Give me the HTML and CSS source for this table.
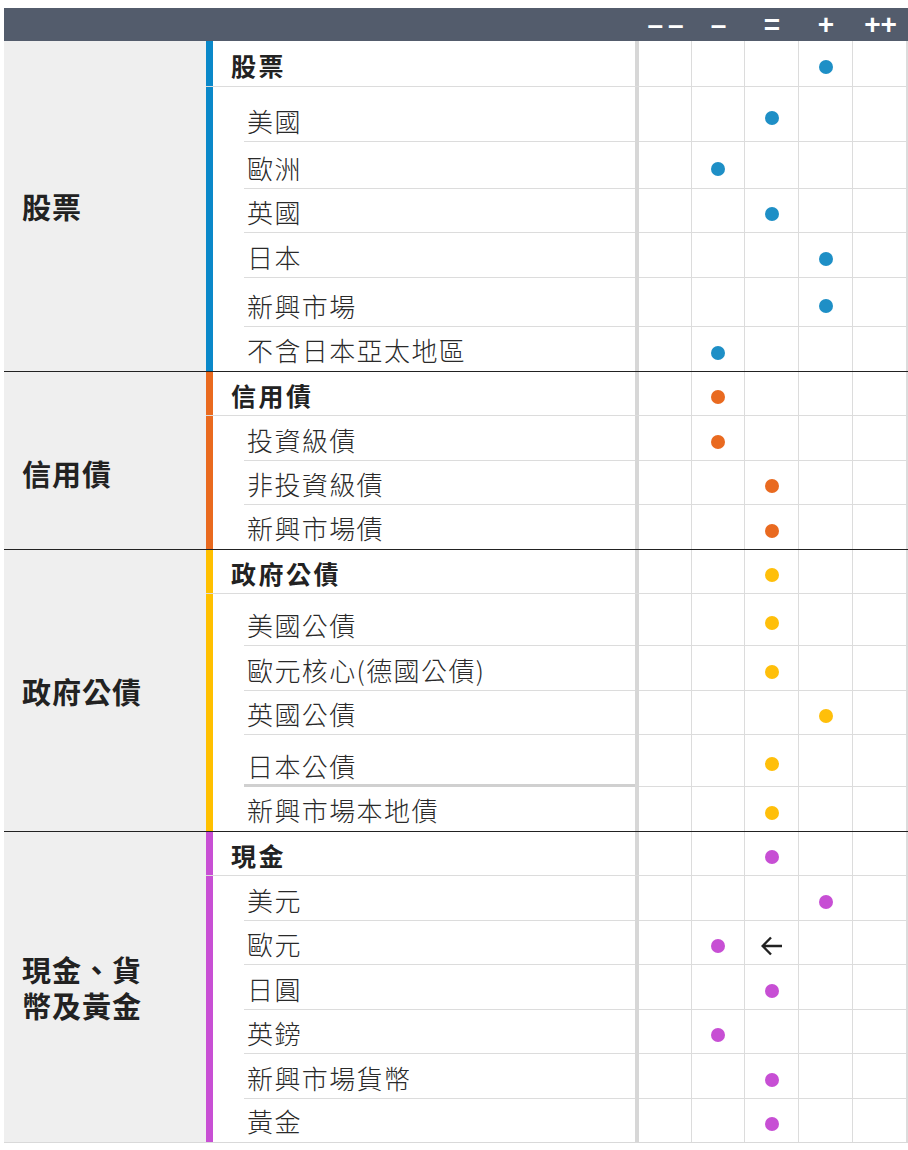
FILE: index.html
```html
<!DOCTYPE html>
<html lang="zh-Hant">
<head>
<meta charset="utf-8">
<title>資產配置觀點</title>
<link rel="stylesheet" href="styles.css">
</head>
<body>
<div class="table">
  <div class="thead">
    <div class="th-spacer"></div>
    <div class="th dd">––</div>
    <div class="th">–</div>
    <div class="th">=</div>
    <div class="th">+</div>
    <div class="th">++</div>
  </div>

  <section class="group g-blue">
    <div class="gname"><span>股票</span></div>
    <div class="rows">
      <div class="row head h46"><div class="label"><span class="txt">股票</span></div><div class="c"></div><div class="c"></div><div class="c"></div><div class="c"><i class="dot"></i></div><div class="c"></div></div>
      <div class="row sub h55"><div class="label"><span class="txt">美國</span></div><div class="c"></div><div class="c"></div><div class="c"><i class="dot"></i></div><div class="c"></div><div class="c"></div></div>
      <div class="row sub h47"><div class="label"><span class="txt">歐洲</span></div><div class="c"></div><div class="c"><i class="dot"></i></div><div class="c"></div><div class="c"></div><div class="c"></div></div>
      <div class="row sub h44"><div class="label"><span class="txt">英國</span></div><div class="c"></div><div class="c"></div><div class="c"><i class="dot"></i></div><div class="c"></div><div class="c"></div></div>
      <div class="row sub h45"><div class="label"><span class="txt">日本</span></div><div class="c"></div><div class="c"></div><div class="c"></div><div class="c"><i class="dot"></i></div><div class="c"></div></div>
      <div class="row sub h49"><div class="label"><span class="txt">新興市場</span></div><div class="c"></div><div class="c"></div><div class="c"></div><div class="c"><i class="dot"></i></div><div class="c"></div></div>
      <div class="row sub last h44"><div class="label"><span class="txt">不含日本亞太地區</span></div><div class="c"></div><div class="c"><i class="dot"></i></div><div class="c"></div><div class="c"></div><div class="c"></div></div>
    </div>
  </section>

  <section class="group g-orange">
    <div class="gname low"><span>信用債</span></div>
    <div class="rows">
      <div class="row head h44"><div class="label"><span class="txt">信用債</span></div><div class="c"></div><div class="c"><i class="dot"></i></div><div class="c"></div><div class="c"></div><div class="c"></div></div>
      <div class="row sub h45"><div class="label"><span class="txt">投資級債</span></div><div class="c"></div><div class="c"><i class="dot"></i></div><div class="c"></div><div class="c"></div><div class="c"></div></div>
      <div class="row sub h44"><div class="label"><span class="txt">非投資級債</span></div><div class="c"></div><div class="c"></div><div class="c"><i class="dot"></i></div><div class="c"></div><div class="c"></div></div>
      <div class="row sub last h44"><div class="label"><span class="txt">新興市場債</span></div><div class="c"></div><div class="c"></div><div class="c"><i class="dot"></i></div><div class="c"></div><div class="c"></div></div>
    </div>
  </section>

  <section class="group g-yellow">
    <div class="gname"><span>政府公債</span></div>
    <div class="rows">
      <div class="row head h44"><div class="label"><span class="txt">政府公債</span></div><div class="c"></div><div class="c"></div><div class="c"><i class="dot"></i></div><div class="c"></div><div class="c"></div></div>
      <div class="row sub h52"><div class="label"><span class="txt">美國公債</span></div><div class="c"></div><div class="c"></div><div class="c"><i class="dot"></i></div><div class="c"></div><div class="c"></div></div>
      <div class="row sub h45"><div class="label"><span class="txt">歐元核心(德國公債)</span></div><div class="c"></div><div class="c"></div><div class="c"><i class="dot"></i></div><div class="c"></div><div class="c"></div></div>
      <div class="row sub h44"><div class="label"><span class="txt">英國公債</span></div><div class="c"></div><div class="c"></div><div class="c"></div><div class="c"><i class="dot"></i></div><div class="c"></div></div>
      <div class="row sub thick h52"><div class="label"><span class="txt">日本公債</span></div><div class="c"></div><div class="c"></div><div class="c"><i class="dot"></i></div><div class="c"></div><div class="c"></div></div>
      <div class="row sub last h44"><div class="label"><span class="txt">新興市場本地債</span></div><div class="c"></div><div class="c"></div><div class="c"><i class="dot"></i></div><div class="c"></div><div class="c"></div></div>
    </div>
  </section>

  <section class="group g-purple end">
    <div class="gname"><span>現金、貨幣及黃金</span></div>
    <div class="rows">
      <div class="row head h44"><div class="label"><span class="txt">現金</span></div><div class="c"></div><div class="c"></div><div class="c"><i class="dot"></i></div><div class="c"></div><div class="c"></div></div>
      <div class="row sub h45"><div class="label"><span class="txt">美元</span></div><div class="c"></div><div class="c"></div><div class="c"></div><div class="c"><i class="dot"></i></div><div class="c"></div></div>
      <div class="row sub h44"><div class="label"><span class="txt">歐元</span></div><div class="c"></div><div class="c"><i class="dot"></i></div><div class="c"><svg class="arrow" viewBox="0 0 21 20" aria-hidden="true"><path d="M21 10H2M10 1.5L1.6 10L10 18.5"/></svg></div><div class="c"></div><div class="c"></div></div>
      <div class="row sub h45"><div class="label"><span class="txt">日圓</span></div><div class="c"></div><div class="c"></div><div class="c"><i class="dot"></i></div><div class="c"></div><div class="c"></div></div>
      <div class="row sub h44"><div class="label"><span class="txt">英鎊</span></div><div class="c"></div><div class="c"><i class="dot"></i></div><div class="c"></div><div class="c"></div><div class="c"></div></div>
      <div class="row sub h45"><div class="label"><span class="txt">新興市場貨幣</span></div><div class="c"></div><div class="c"></div><div class="c"><i class="dot"></i></div><div class="c"></div><div class="c"></div></div>
      <div class="row sub last h43"><div class="label"><span class="txt">黃金</span></div><div class="c"></div><div class="c"></div><div class="c"><i class="dot"></i></div><div class="c"></div><div class="c"></div></div>
    </div>
  </section>
</div>
</body>
</html>
```

FILE: styles.css
```css
* { box-sizing: border-box; }

html, body {
  margin: 0;
  padding: 0;
  background: #ffffff;
}

body {
  font-family: "Noto Sans CJK TC", "Noto Sans", sans-serif;
  color: #222;
}

.table {
  margin: 8px 0 0 4px;
  width: 904px;
}

/* ---------- header ---------- */
.thead {
  display: grid;
  grid-template-columns: 635px 53px 53px 54px 54px 55px;
  height: 33px;
  background: #535c6c;
}

.th {
  font-family: "Liberation Sans", Arial, sans-serif;
  font-weight: 700;
  font-size: 28px;
  line-height: 34px;
  color: #ffffff;
  text-align: center;
  white-space: nowrap;
  overflow: hidden;
}

.th.dd {
  letter-spacing: 5px;
  padding-left: 5px;
}

/* ---------- groups ---------- */
.group {
  display: grid;
  grid-template-columns: 202px 702px;
  border-bottom: 1px solid #222;
}

.group.end {
  border-bottom-color: #d9d9d9;
}

.g-blue   { --bar: #0a88c9; --dot: #1e8fc6; }
.g-orange { --bar: #e96a1f; --dot: #e96a20; }
.g-yellow { --bar: #ffc000; --dot: #ffbf0a; }
.g-purple { --bar: #c84fd4; --dot: #c74fd4; }

.gname {
  background: #efefef;
  display: flex;
  align-items: center;
  padding-left: 18px;
  font-size: 29px;
  font-weight: 700;
  line-height: 36px;
  letter-spacing: 1px;
  color: #222;
}

.gname span {
  width: 130px;
}

.gname.low {
  padding-top: 24px;
}

.rows {
  display: flex;
  flex-direction: column;
}

/* ---------- rows ---------- */
.row {
  display: grid;
  grid-template-columns: 433px 53px 53px 54px 54px 55px;
}

.h43 { height: 43px; }
.h44 { height: 44px; }
.h45 { height: 45px; }
.h46 { height: 46px; }
.h47 { height: 47px; }
.h49 { height: 49px; }
.h52 { height: 52px; }
.h55 { height: 55px; }

.label {
  border-left: 7px solid var(--bar);
  border-right: 4px solid #d7d7d7;
  display: flex;
}

.row.head {
  border-bottom: 1px solid #dcdcdc;
}

.row.head .label {
  align-items: center;
  padding-left: 18px;
}

.row.head .txt {
  font-size: 25px;
  font-weight: 700;
  line-height: 30px;
  letter-spacing: 2.5px;
  color: #222;
  padding-top: 2px;
}

.row.sub .label {
  padding-left: 31px;
}

.row.sub .txt {
  flex: 1;
  display: flex;
  align-items: flex-end;
  padding: 0 0 5px 3px;
  font-size: 26px;
  font-weight: 300;
  line-height: 30px;
  letter-spacing: 1.4px;
  color: #2a2a2a;
  white-space: nowrap;
  border-bottom: 1px solid #dcdcdc;
}

.row.sub.thick .txt {
  border-bottom: 3px solid #d0d0d0;
  padding-bottom: 3px;
}

.c {
  display: flex;
  justify-content: center;
  align-items: center;
  padding-top: 7px;
  border-right: 1px solid #dcdcdc;
}

.c:last-child {
  border-right-width: 2px;
}

.row.sub .c {
  border-bottom: 1px solid #dcdcdc;
}

.row.last .c,
.row.last .txt {
  border-bottom: none;
}

.row.last .txt {
  padding-bottom: 6px;
}

.dot {
  display: block;
  width: 14px;
  height: 14px;
  border-radius: 50%;
  background: var(--dot);
}

.arrow {
  display: block;
  width: 21px;
  height: 20px;
  fill: none;
  stroke: #222;
  stroke-width: 2.4;
  stroke-linecap: butt;
  stroke-linejoin: miter;
}
```
